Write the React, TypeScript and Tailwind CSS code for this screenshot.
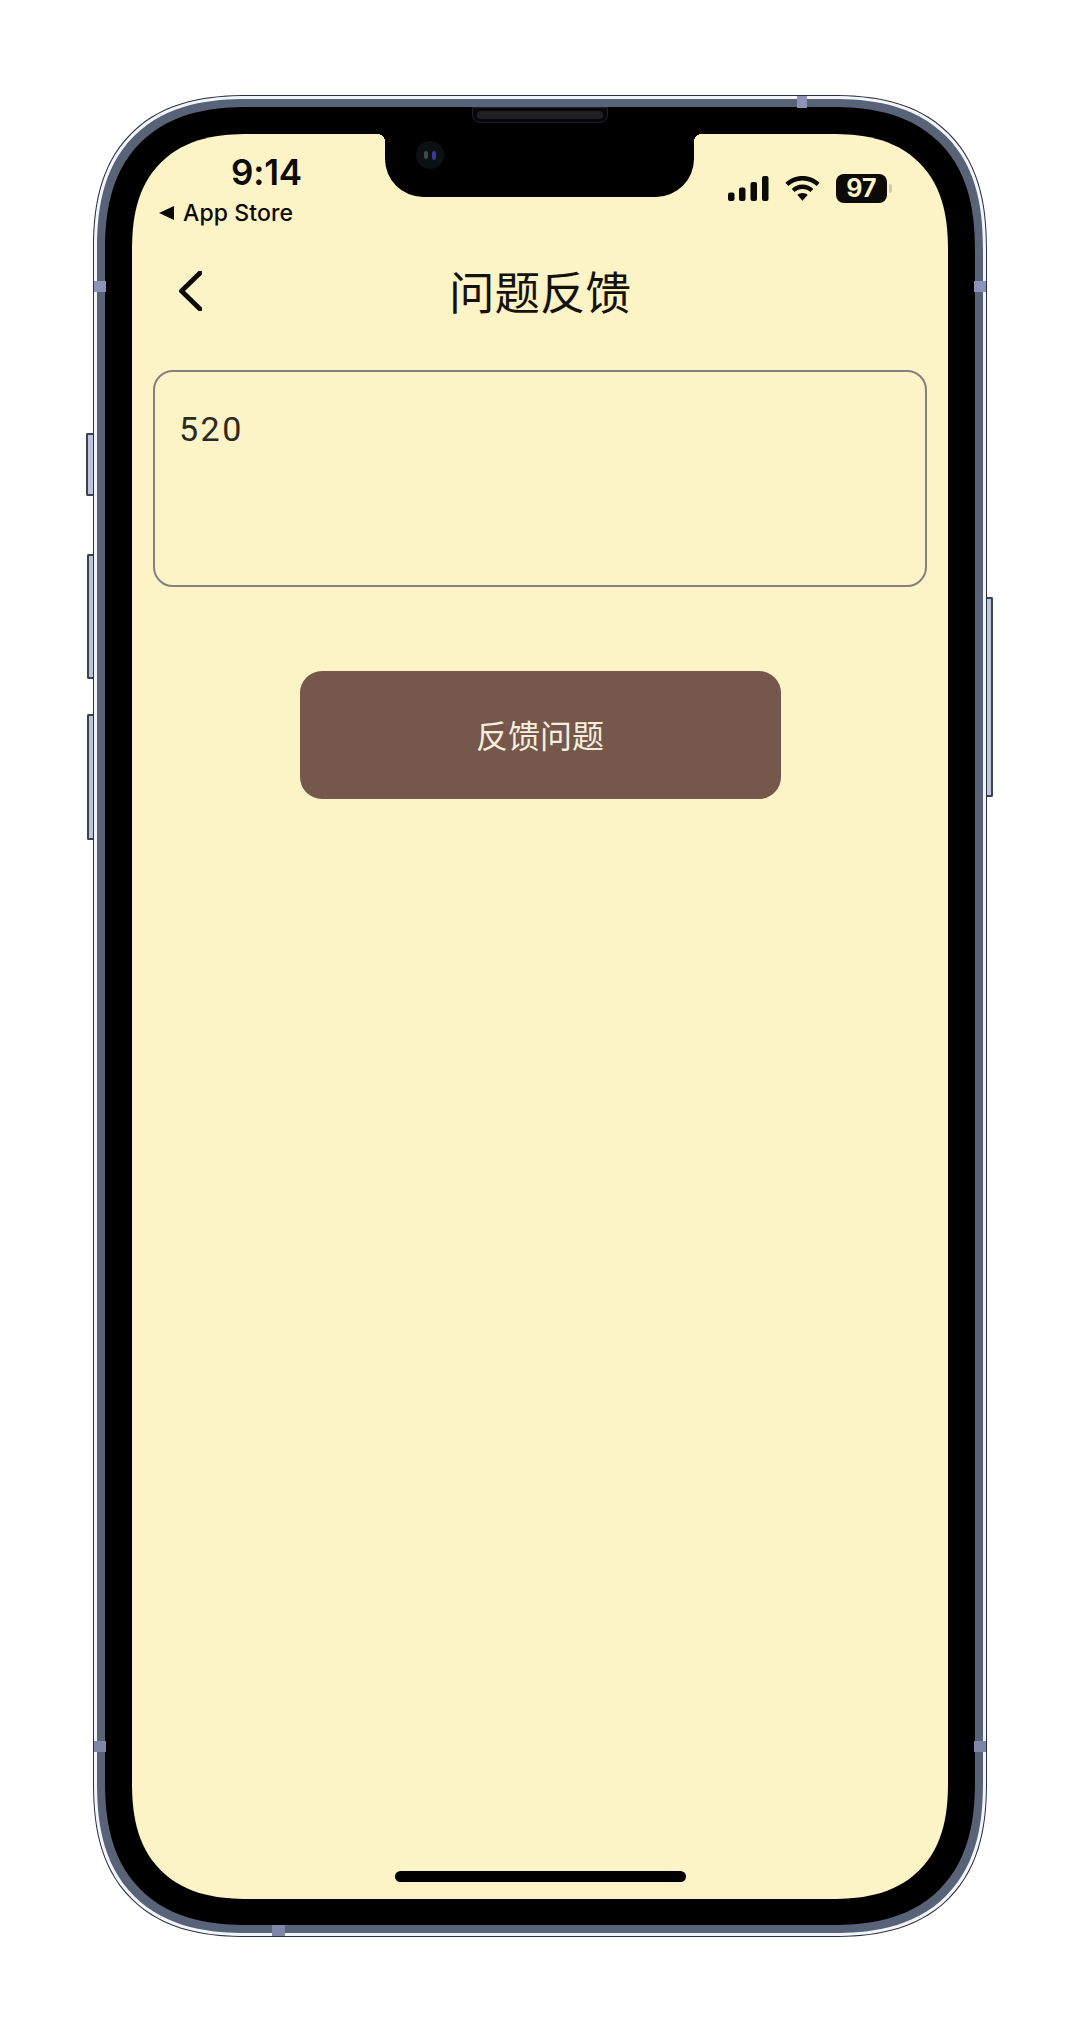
import { useState } from "react";

function SignalIcon() {
  return (
    <svg width="41" height="25" viewBox="0 0 41 25" fill="#0b0a06">
      <rect x="0" y="16.5" width="6.5" height="8.5" rx="2" />
      <rect x="11" y="11.5" width="6.5" height="13.5" rx="2" />
      <rect x="22.500" y="6" width="6.5" height="19" rx="2" />
      <rect x="34" y="0" width="6.5" height="25" rx="2" />
    </svg>
  );
}

function WifiIcon() {
  return (
    <svg width="35" height="25" viewBox="0 0 35 25" fill="#0b0a06">
      <path d="M17.5 0C10.800 0 4.900 2.600 0.400 6.800L3.300 10C7 6.500 12 4.400 17.500 4.400S28 6.500 31.700 10L34.600 6.800C30.100 2.600 24.200 0 17.500 0Z" />
      <path d="M17.500 8.600C13.300 8.600 9.500 10.200 6.700 12.900L9.600 16C11.700 14.100 14.500 13 17.500 13S23.300 14.100 25.400 16L28.300 12.900C25.500 10.200 21.700 8.600 17.500 8.600Z" />
      <path d="M17.500 17C15.500 17 13.700 17.700 12.400 18.900L17.500 24.800L22.600 18.900C21.300 17.700 19.500 17 17.500 17Z" />
    </svg>
  );
}

function StatusBar() {
  return (
    <div className="h-[100px] flex items-start justify-between font-['Inter',sans-serif] text-[#0b0a06]">
      <div className="pl-[27px] pt-[17px] flex flex-col">
        <span className="pl-[72px] text-[35px] leading-[42px] font-semibold tracking-[-0.2px]">9:14</span>
        <div className="flex items-center gap-[9px] mt-[3px]">
          <span className="w-0 h-0 border-y-[7px] border-y-transparent border-r-[15px] border-r-[#0b0a06]" />
          <span className="text-[23px] leading-[34px] font-medium tracking-[0.1px]">App Store</span>
        </div>
      </div>
      <div className="flex items-center pt-[40px] pr-[56px]">
        <SignalIcon />
        <div className="ml-[16px]">
          <WifiIcon />
        </div>
        <div className="ml-[16px] w-[51px] h-[29px] bg-[#0b0a06] rounded-[8px] flex items-center justify-center">
          <span className="text-[25px] leading-none font-bold text-[#fcf3c6]">97</span>
        </div>
        <span className="ml-[2px] w-[3px] h-[9px] rounded-r-full bg-[#cfcab0]" />
      </div>
    </div>
  );
}

function NavBar() {
  return (
    <div className="h-[136px] relative flex justify-center pt-[23px]">
      <button className="absolute left-[47px] top-[37px]">
        <svg width="23" height="40" viewBox="0 0 23 40" fill="none" stroke="#0b0a06" strokeWidth="4.800" strokeLinecap="round" strokeLinejoin="round" className="block">
          <path d="M21 2L2.500 20L21 38" />
        </svg>
      </button>
      <h1 className="text-[45.500px] leading-[66px] font-normal text-[#14120c] font-['Noto_Sans_CJK_SC',sans-serif]">问题反馈</h1>
    </div>
  );
}

export default function App() {
  const [text, setText] = useState("520");

  return (
    <div className="w-[1080px] h-[2033px] bg-white pl-[93px] pt-[95px]">
      {/* handset */}
      <div className="relative w-[894px] h-[1842px]">
        <div className="absolute left-[-7px] top-[338px] w-[8px] h-[63px] bg-[#bcc6da] border-y-2 border-l-2 border-[#3a4252] rounded-l-[2px]" />
        <div className="absolute left-[-6px] top-[459px] w-[7px] h-[125px] bg-[#bcc6da] border-y-2 border-l-2 border-[#3a4252] rounded-l-[2px]" />
        <div className="absolute left-[-6px] top-[619px] w-[7px] h-[126px] bg-[#bcc6da] border-y-2 border-l-2 border-[#3a4252] rounded-l-[2px]" />
        <div className="absolute right-[-6px] top-[502px] w-[7px] h-[200px] bg-[#bcc6da] border-y-2 border-r-2 border-[#3a4252] rounded-r-[2px]" />

        <div className="relative h-full rounded-[155px] [corner-shape:superellipse(1.3)] border border-[#2b3140] bg-[#f2f5fa] p-[3px]">
          <div className="h-full rounded-[151px] [corner-shape:superellipse(1.3)] bg-[#586378] p-[8px]">
            <div className="h-full rounded-[145px] [corner-shape:superellipse(1.3)] bg-black pt-[27px] pb-[26px] px-[27px]">
              <div className="relative h-full rounded-[117px] [corner-shape:superellipse(1.3)] bg-[#fcf3c6] flex flex-col overflow-hidden">
                {/* notch */}
                <div className="absolute left-[253px] top-0 w-[309px] h-[63px] bg-black rounded-b-[38px]" />
                <div className="absolute left-[245px] top-0 w-[8px] h-[8px] bg-[radial-gradient(circle_at_0_100%,#fcf3c6_8px,#000_8px)]" />
                <div className="absolute left-[562px] top-0 w-[8px] h-[8px] bg-[radial-gradient(circle_at_100%_100%,#fcf3c6_8px,#000_8px)]" />

                <StatusBar />
                <NavBar />

                <div className="px-[21px]">
                  <textarea
                    value={text}
                    onChange={(e) => setText(e.target.value)}
                    className="block w-full h-[217px] resize-none rounded-[20px] border-2 border-[#85807c] bg-transparent pl-[24px] pt-[35px] text-[34px] leading-[44px] tracking-[2.500px] text-[#2b2a20] outline-none font-['Roboto',sans-serif]"
                  />
                </div>

                <div className="flex justify-center pt-[84px]">
                  <button className="w-[481px] h-[128px] rounded-[22px] bg-[#75574b] pb-[2px] text-[32px] text-[#f7eedd] font-['Noto_Sans_CJK_SC',sans-serif]">
                    反馈问题
                  </button>
                </div>

                <div className="mt-auto pb-[17px] flex justify-center">
                  <div className="w-[291px] h-[11px] rounded-full bg-black" />
                </div>
              </div>
            </div>
          </div>
        </div>

        {/* speaker and camera sit on the bezel */}
        <div className="absolute left-[379px] top-[12px] w-[136px] h-[16px] rounded-b-[8px] border border-[#1d1f24] bg-[#08080a] flex items-center justify-center">
          <div className="w-[126px] h-[8px] rounded-full bg-[#202022]" />
        </div>
        <div className="absolute left-[323px] top-[46px] w-[28px] h-[28px] rounded-full bg-[#0c1012] flex items-center justify-center gap-[4px]">
          <div className="w-[4px] h-[8px] rounded-full bg-[#3c4c4c]" />
          <div className="w-[4px] h-[9px] rounded-full bg-[#3a3a90]" />
        </div>

        {/* antenna bands */}
        <div className="absolute left-[704px] top-[1px] w-[10px] h-[12px] bg-[#8d93b8]" />
        <div className="absolute left-[179px] bottom-[1px] w-[13px] h-[11px] bg-[#7f86a8]" />
        <div className="absolute left-[1px] top-[186px] w-[12px] h-[11px] bg-[#8d93b8]" />
        <div className="absolute right-[1px] top-[186px] w-[12px] h-[11px] bg-[#8d93b8]" />
        <div className="absolute left-[1px] top-[1646px] w-[12px] h-[11px] bg-[#7f86a8]" />
        <div className="absolute right-[1px] top-[1646px] w-[12px] h-[11px] bg-[#7f86a8]" />
      </div>
    </div>
  );
}
